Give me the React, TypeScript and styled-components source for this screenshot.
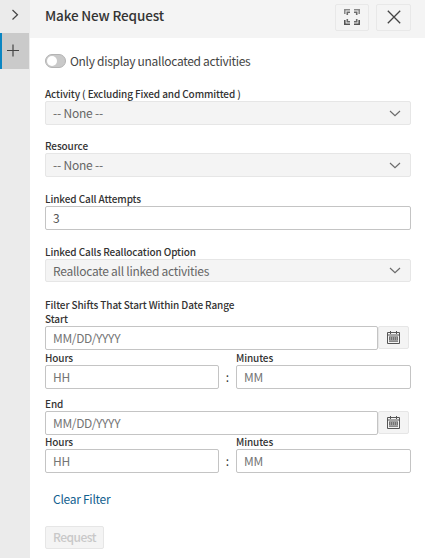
import { useState } from 'react';
import styled, { createGlobalStyle } from 'styled-components';

interface TimeRowProps {
  compact?: boolean;
}

export default function MakeRequestPage() {
  const [onlyUnallocated, setOnlyUnallocated] = useState(false);
  const [attempts, setAttempts] = useState('3');

  return (
    <>
      <GlobalStyle />
      <PageWrapper>
        <SideRail>
          <RailButton aria-label="Expand">
            <svg width="30" height="33" viewBox="0 0 30 33">
              <path d="M12.5 10 L17.5 14.7 L12.5 19.5" />
            </svg>
          </RailButton>
          <RailTab aria-label="New request">
            <svg width="27" height="36" viewBox="0 0 27 36">
              <path d="M5 17.5 H17 M11 11.5 V23.5" />
            </svg>
          </RailTab>
        </SideRail>

        <Panel>
          <Header>
            <Title>Make New Request</Title>
            <HeaderButton $width={34} aria-label="Full screen">
              <ExpandIcon />
            </HeaderButton>
            <HeaderButton $width={35} aria-label="Close">
              <svg width="14" height="14" viewBox="0 0 14 14">
                <path d="M.8 .8 L13.2 13.2 M13.2 .8 L.8 13.2" stroke="#444" strokeWidth="1.3" fill="none" />
              </svg>
            </HeaderButton>
          </Header>

          <Form onSubmit={(e) => e.preventDefault()}>
            <ToggleRow>
              <Toggle
                type="button"
                role="switch"
                aria-checked={onlyUnallocated}
                $on={onlyUnallocated}
                onClick={() => setOnlyUnallocated(!onlyUnallocated)}
              />
              <ToggleLabel>Only display unallocated activities</ToggleLabel>
            </ToggleRow>

            <Field $gap={14}>
              <Label>Activity ( Excluding Fixed and Committed )</Label>
              <SelectBox $height={24}>
                <DashedValue>-- None --</DashedValue>
                <Chevron />
              </SelectBox>
            </Field>

            <Field $gap={14}>
              <Label>Resource</Label>
              <SelectBox $height={24}>
                <DashedValue>-- None --</DashedValue>
                <Chevron />
              </SelectBox>
            </Field>

            <Field $gap={15}>
              <Label>Linked Call Attempts</Label>
              <Input value={attempts} onChange={(e) => setAttempts(e.target.value)} />
            </Field>

            <Field $gap={15}>
              <Label>Linked Calls Reallocation Option</Label>
              <SelectBox $height={23}>
                Reallocate all linked activities
                <Chevron />
              </SelectBox>
            </Field>

            <GroupLabel>Filter Shifts That Start Within Date Range</GroupLabel>
            <DateField label="Start" />
            <TimeRow />
            <DateGap />
            <DateField label="End" />
            <TimeRow compact />

            <ClearLink type="button">Clear Filter</ClearLink>
            <RequestButton disabled>Request</RequestButton>
          </Form>
        </Panel>
      </PageWrapper>
    </>
  );
}

function DateField({ label }: { label: string }) {
  return (
    <Field $gap={0}>
      <Label>{label}</Label>
      <DateRow>
        <Input placeholder="MM/DD/YYYY" />
        <CalendarButton type="button" aria-label="Pick date">
          <CalendarIcon />
        </CalendarButton>
      </DateRow>
    </Field>
  );
}

function TimeRow({ compact = false }: TimeRowProps) {
  return (
    <TimeGrid $compact={compact}>
      <Field $gap={0}>
        <Label>Hours</Label>
        <Input placeholder="HH" />
      </Field>
      <Colon>:</Colon>
      <Field $gap={0}>
        <Label>Minutes</Label>
        <Input placeholder="MM" />
      </Field>
    </TimeGrid>
  );
}

function Chevron() {
  return (
    <svg width="12" height="7" viewBox="0 0 12 7">
      <path d="M1 1 L6 5.7 L11 1" fill="none" stroke="#6b6b6b" strokeWidth="1.2" />
    </svg>
  );
}

function ExpandIcon() {
  return (
    <svg width="16" height="16" viewBox="0 0 16 16" fill="none">
      <g stroke="#8a8a8a" strokeWidth="1.6">
        <path d="M.8 5 V.8 H6" />
        <path d="M10 .8 H15.2 V5" />
      </g>
      <g stroke="#6a6a6a" strokeWidth="1.6">
        <path d="M3.3 6 V3.3 H6" />
        <path d="M12.7 6 V3.3 H10" />
        <path d="M3.3 10 V12.7 H6" />
        <path d="M12.7 10 V12.7 H10" />
      </g>
      <g stroke="#555" strokeWidth="1.6">
        <path d="M.8 11 V15.2 H6" />
        <path d="M10 15.2 H15.2 V11" />
      </g>
    </svg>
  );
}

function CalendarIcon() {
  return (
    <svg width="13" height="13" viewBox="0 0 13 13">
      <path d="M.5 1.5 H12.5 V12.5 H.5 Z M.5 4 H12.5" fill="none" stroke="#555" />
      <path d="M3.5 0 V3 M9.5 0 V3" stroke="#555" />
      <rect x="2" y="5" width="9" height="5.5" fill="#a0a0a0" />
      <path d="M2.5 6 V9 M4.5 6 V9 M6.5 6 V9 M8.5 6 V9 M10.5 6 V9" stroke="#666" strokeWidth=".8" />
      <path d="M2 10.5 H11" stroke="#777" strokeWidth=".8" />
    </svg>
  );
}

// Styled Components
const GlobalStyle = createGlobalStyle`
  * {
    box-sizing: border-box;
  }

  body {
    margin: 0;
    background: #fff;
  }

  body, button, input {
    font-family: "Noto Sans CJK SC", "Noto Sans", sans-serif;
  }
`;

const PageWrapper = styled.div`
  display: flex;
  height: 558px;
  overflow: hidden;
`;

const SideRail = styled.nav`
  display: flex;
  flex-direction: column;
  width: 30px;
  background: #ebebeb;

  svg {
    display: block;
    fill: none;
    stroke: #444;
    stroke-width: 1.2;
  }
`;

const RailButton = styled.button`
  width: 30px;
  height: 33px;
  padding: 0;
  border: none;
  background: transparent;
`;

const RailTab = styled(RailButton)`
  width: 29px;
  height: 36px;
  border-left: 2px solid #0a85c2;
  background: #cacaca;
`;

const Panel = styled.main`
  flex: 1;
`;

const Header = styled.header`
  display: flex;
  gap: 7px;
  height: 38px;
  padding: 4px 14px 0 15px;
  background: #f4f4f4;
`;

const Title = styled.h1`
  flex: 1;
  margin: 0;
  color: #333;
  font-size: 13.5px;
  font-weight: 500;
  letter-spacing: -0.15px;
  line-height: 23px;
  white-space: nowrap;
`;

const HeaderButton = styled.button<{ $width: number }>`
  display: flex;
  align-items: center;
  justify-content: center;
  width: ${props => props.$width}px;
  height: 27px;
  padding: 0 0 1px;
  border: 1px solid #e8e8e8;
  border-radius: 2px;
  background: #f4f4f4;
`;

const Form = styled.form`
  display: flex;
  flex-direction: column;
  padding: 13px 14px 0 15px;
`;

const ToggleRow = styled.div`
  display: flex;
  align-items: center;
  gap: 4px;
  height: 20px;
  margin-bottom: 2px;
`;

const Toggle = styled.button<{ $on: boolean }>`
  display: flex;
  align-items: center;
  justify-content: ${props => props.$on ? 'flex-end' : 'flex-start'};
  width: 21px;
  height: 14px;
  padding: 0 1px;
  border: 1px solid #b4b4b4;
  border-radius: 7px;
  background: ${props => props.$on ? '#0a85c2' : '#c9c9c9'};

  &::before {
    content: '';
    width: 10px;
    height: 10px;
    border-radius: 50%;
    background: #fff;
  }
`;

const ToggleLabel = styled.span`
  color: #444;
  font-size: 12px;
  letter-spacing: -0.3px;
  line-height: 20px;
  white-space: nowrap;
`;

const Field = styled.div<{ $gap: number }>`
  display: flex;
  flex-direction: column;
  margin-top: ${props => props.$gap}px;
`;

const Label = styled.label`
  height: 14px;
  color: #333;
  font-size: 10px;
  font-weight: 500;
  letter-spacing: -0.11px;
  line-height: 14px;
  white-space: nowrap;
`;

const GroupLabel = styled(Label)`
  margin-top: 16px;
`;

const SelectBox = styled.div<{ $height: number }>`
  display: flex;
  align-items: center;
  justify-content: space-between;
  height: ${props => props.$height}px;
  padding: 0 9px 0 7px;
  border: 1px solid #e6e6e6;
  border-radius: 2px;
  background: #f4f4f4;
  color: #666;
  font-size: 12px;
  letter-spacing: -0.27px;
  line-height: 20px;
`;

const DashedValue = styled.span`
  padding-bottom: 1px;
  letter-spacing: -0.2px;
`;

const Input = styled.input`
  width: 100%;
  height: 24px;
  padding: 0 7px 2px;
  border: 1px solid #c4c4c4;
  border-radius: 2px;
  background: #fff;
  color: #555;
  font-size: 12px;
  letter-spacing: -0.35px;
  outline: none;

  &::placeholder {
    color: #757575;
    opacity: 1;
  }
`;

const DateRow = styled.div`
  display: flex;
  width: 364px;
`;

const CalendarButton = styled.button`
  display: flex;
  flex: none;
  align-items: center;
  justify-content: center;
  width: 31px;
  height: 23px;
  padding: 0;
  border: 1px solid #e6e6e6;
  border-radius: 2px;
  background: #f4f4f4;
`;

const TimeGrid = styled.div<{ $compact: boolean }>`
  display: grid;
  grid-template-columns: 174px 17px 175px;
  margin-top: ${props => props.$compact ? 0 : 1}px;
`;

const Colon = styled.span`
  align-self: end;
  height: 24px;
  color: #333;
  font-size: 12px;
  line-height: 23px;
  text-align: center;
`;

const DateGap = styled.div`
  height: 8px;
`;

const ClearLink = styled.button`
  align-self: flex-start;
  height: 20px;
  margin: 16px 0 0 8px;
  padding: 0;
  border: none;
  background: transparent;
  color: #12618f;
  font-size: 12px;
  letter-spacing: -0.27px;
  line-height: 20px;
`;

const RequestButton = styled.button`
  width: 59px;
  height: 23px;
  margin-top: 17px;
  padding: 0 0 2px;
  border: 1px solid #e6e6e6;
  border-radius: 2px;
  background: #f4f4f4;
  color: #c8c8c8;
  font-size: 12px;
  font-weight: 500;
  letter-spacing: -0.5px;
  line-height: 19px;
`;
